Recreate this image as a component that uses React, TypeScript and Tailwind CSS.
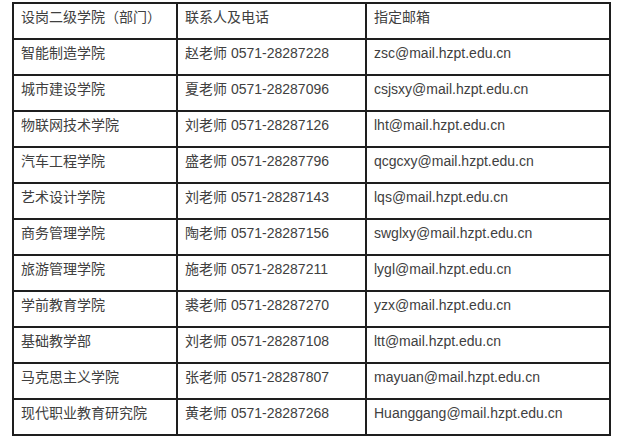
import React from 'react';

/* 二级学院联系方式表 */

type Row = [string, string, string];

const rows: Row[] = [
  ['设岗二级学院（部门）', '联系人及电话', '指定邮箱'],
  ['智能制造学院', '赵老师 0571-28287228', 'zsc@mail.hzpt.edu.cn'],
  ['城市建设学院', '夏老师 0571-28287096', 'csjsxy@mail.hzpt.edu.cn'],
  ['物联网技术学院', '刘老师 0571-28287126', 'lht@mail.hzpt.edu.cn'],
  ['汽车工程学院', '盛老师 0571-28287796', 'qcgcxy@mail.hzpt.edu.cn'],
  ['艺术设计学院', '刘老师 0571-28287143', 'lqs@mail.hzpt.edu.cn'],
  ['商务管理学院', '陶老师 0571-28287156', 'swglxy@mail.hzpt.edu.cn'],
  ['旅游管理学院', '施老师 0571-28287211', 'lygl@mail.hzpt.edu.cn'],
  ['学前教育学院', '裘老师 0571-28287270', 'yzx@mail.hzpt.edu.cn'],
  ['基础教学部', '刘老师 0571-28287108', 'ltt@mail.hzpt.edu.cn'],
  ['马克思主义学院', '张老师 0571-28287807', 'mayuan@mail.hzpt.edu.cn'],
  ['现代职业教育研究院', '黄老师 0571-28287268', 'Huanggang@mail.hzpt.edu.cn'],
];

export default function App() {
  return (
    <div className="w-[618px] h-[441px] bg-white pt-[2px] pl-[12px] font-['Liberation_Sans','Noto_Sans_CJK_SC',sans-serif] text-[14px] leading-[20px] text-[#404040]">
      <div className="w-[599px] border-2 border-[#1e1e1e] grid grid-cols-[164px_189px_242px]">
        {rows.map((row, i) => {
          const last = i === rows.length - 1;
          return row.map((cell, j) => (
            <div
              key={`${i}-${j}`}
              className={[
                'pl-[7px] pt-[3px] whitespace-nowrap border-[#1e1e1e]',
                last ? 'h-[34px]' : 'h-[36px] border-b-2',
                j < 2 ? 'border-r-2' : '',
              ].join(' ')}
            >
              {cell}
            </div>
          ));
        })}
      </div>
    </div>
  );
}
